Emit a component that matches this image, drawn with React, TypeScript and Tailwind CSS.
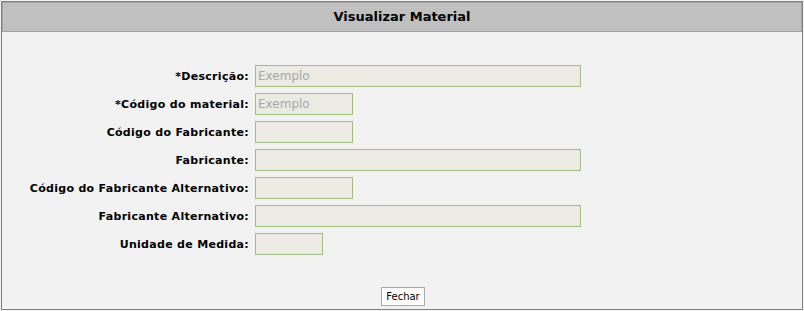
const fields = [
  { label: "*Descrição:", width: "w-[326px]", placeholder: "Exemplo" },
  { label: "*Código do material:", width: "w-[98px]", placeholder: "Exemplo" },
  { label: "Código do Fabricante:", width: "w-[98px]", placeholder: "" },
  { label: "Fabricante:", width: "w-[326px]", placeholder: "" },
  { label: "Código do Fabricante Alternativo:", width: "w-[98px]", placeholder: "" },
  { label: "Fabricante Alternativo:", width: "w-[326px]", placeholder: "" },
  { label: "Unidade de Medida:", width: "w-[68px]", placeholder: "" },
];

export default function App() {
  return (
    <div className="w-[804px] h-[311px] bg-[#f2f2f2] pt-[1px] pl-[1px] font-['DejaVu_Sans',Verdana,sans-serif]">
      <div className="w-[802px] h-[309px] border border-[#808080] bg-[#f2f2f2] flex flex-col">
        <div className="h-[30px] bg-[#c0c0c0] border border-[#a3a3a3] flex items-center justify-center text-[13px] font-bold text-black">
          Visualizar Material
        </div>
        <div className="pt-[33px] flex flex-col gap-[6px]">
          {fields.map((f) => (
            <div key={f.label} className="flex items-center h-[22px]">
              <div className="w-[247px] text-right text-[11px] font-bold tracking-[0.3px] text-black leading-none">
                {f.label}
              </div>
              <input
                readOnly
                placeholder={f.placeholder}
                className={`ml-[6px] h-[22px] ${f.width} bg-[#ebebe4] border border-[#a1bf80] px-[2px] text-[12px] text-[#a0a0a0] placeholder:text-[#a8a8a8] font-['DejaVu_Sans',Verdana,sans-serif] outline-none`}
              />
            </div>
          ))}
        </div>
        <div className="flex-1" />
        <div className="flex justify-center mb-[3px]">
          <button className="ml-[2px] h-[19px] px-[4px] bg-white border border-[#a8a8a8] text-[10px] text-black leading-none">
            Fechar
          </button>
        </div>
      </div>
    </div>
  );
}
